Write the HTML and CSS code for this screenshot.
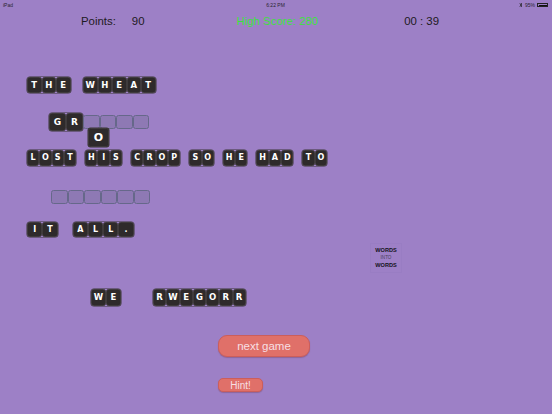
FILE: index.html
```html
<!DOCTYPE html>
<html>
<head>
<meta charset="utf-8">
<link rel="stylesheet" href="styles.css">
</head>
<body>
<div class="status">
  <span class="st-left">iPad</span>
  <span class="st-mid">6:22 PM</span>
  <span class="st-right">
    <svg class="bt" width="4" height="6" viewBox="0 0 4 6"><path d="M0.5 1.5 L3 4 L2 5 L2 1 L3 2 L0.5 4.5" fill="none" stroke="#222" stroke-width="0.6"/></svg>
    <span>95%</span>
    <span class="battery"><span class="battery-fill"></span></span>
  </span>
</div>

<div class="header">
  <span class="points-label">Points:</span>
  <span class="points-val">90</span>
  <span class="high">High Score: 280</span>
  <span class="timer">00 : 39</span>
</div>

<div class="row row1">
  <div class="word"><span class="tile">T</span><span class="tile">H</span><span class="tile">E</span></div>
  <div class="word"><span class="tile">W</span><span class="tile">H</span><span class="tile">E</span><span class="tile">A</span><span class="tile">T</span></div>
</div>

<div class="row row2">
  <div class="word"><span class="tile">G</span><span class="tile">R</span></div>
  <div class="slots"><span class="slot"></span><span class="slot"></span><span class="slot"></span><span class="slot"></span></div>
  <span class="tile tile-o">O</span>
</div>

<div class="row row3">
  <div class="word"><span class="tile">L</span><span class="tile">O</span><span class="tile">S</span><span class="tile">T</span></div>
  <div class="word"><span class="tile">H</span><span class="tile">I</span><span class="tile">S</span></div>
  <div class="word"><span class="tile">C</span><span class="tile">R</span><span class="tile">O</span><span class="tile">P</span></div>
  <div class="word"><span class="tile">S</span><span class="tile">O</span></div>
  <div class="word"><span class="tile">H</span><span class="tile">E</span></div>
  <div class="word"><span class="tile">H</span><span class="tile">A</span><span class="tile">D</span></div>
  <div class="word"><span class="tile">T</span><span class="tile">O</span></div>
</div>

<div class="row row4">
  <div class="slots"><span class="slot"></span><span class="slot"></span><span class="slot"></span><span class="slot"></span><span class="slot"></span><span class="slot"></span></div>
</div>

<div class="row row5">
  <div class="word"><span class="tile">I</span><span class="tile">T</span></div>
  <div class="word"><span class="tile">A</span><span class="tile">L</span><span class="tile">L</span><span class="tile">.</span></div>
</div>

<div class="row row-logo">
  <div class="logo">
    <span class="logo-w">WORDS</span>
    <span class="logo-i">INTO</span>
    <span class="logo-w">WORDS</span>
  </div>
</div>

<div class="row row6">
  <div class="word word-we"><span class="tile">W</span><span class="tile">E</span></div>
  <div class="word word-scr"><span class="tile">R</span><span class="tile">W</span><span class="tile">E</span><span class="tile">G</span><span class="tile">O</span><span class="tile">R</span><span class="tile">R</span></div>
</div>

<div class="row row-btn">
  <button class="btn btn-next">next game</button>
</div>
<div class="row row-hint">
  <button class="btn btn-hint">Hint!</button>
</div>
</body>
</html>
```

FILE: styles.css
```css
* { box-sizing: border-box; }
html, body {
  margin: 0;
  padding: 0;
}
body {
  width: 552px;
  height: 414px;
  overflow: hidden;
  background: #9d80c6;
  font-family: "Liberation Sans", Arial, sans-serif;
  color: #1e1a22;
}

/* status bar */
.status {
  height: 10px;
  display: grid;
  grid-template-columns: 1fr auto 1fr;
  align-items: center;
  font-size: 5px;
  color: #2a2530;
  padding: 0 4px 0 3px;
}
.st-mid { text-align: center; }
.st-right {
  display: flex;
  justify-content: flex-end;
  align-items: center;
  gap: 2px;
}
.battery {
  width: 11px;
  height: 4px;
  border: 0.6px solid #222;
  padding: 0.5px;
  display: flex;
}
.battery-fill { flex: 1; background: #111; }

/* header */
.header {
  height: 21px;
  display: flex;
  align-items: center;
  font-size: 11.4px;
  padding-left: 81px;
  white-space: nowrap;
}
.points-val { margin-left: 16px; }
.high { margin-left: 92px; color: #3ee23e; }
.timer { margin-left: 86px; }

/* board rows */
.row {
  display: flex;
  align-items: center;
}
.word {
  display: flex;
  border-radius: 3px;
  box-shadow: 0 0 0 0.5px #3a3536;
}
.tile {
  display: flex;
  align-items: center;
  justify-content: center;
  background: #2e2a2b;
  border: 1px solid #3f3b3c;
  border-radius: 2.5px;
  color: #ffffff;
  font-family: "DejaVu Sans", Verdana, sans-serif;
  font-weight: bold;
  font-size: 8px;
  line-height: 1;
}

.row1 { margin-top: 46px; height: 16px; padding-left: 27px; gap: 12.5px; }
.row1 .tile { width: 14.5px; height: 16px; font-size: 8.5px; }

.row2 { margin-top: 20px; height: 18px; padding-left: 49px; position: relative; }
.row2 .word .tile { width: 17px; height: 18.5px; font-size: 9px; }
.tile-o {
  position: absolute;
  left: 88px;
  top: 15px;
  width: 21px;
  height: 18.5px;
  font-size: 11px;
  box-shadow: 0 0 0 0.5px #3a3536;
}

.slots { display: flex; }
.slot {
  width: 16.5px;
  height: 14px;
  background: #8e79b4;
  border: 1px solid #66688a;
  border-radius: 2.5px;
}

.row3 { margin-top: 19px; height: 16px; padding-left: 27px; gap: 9px; }
.row3 .tile { width: 12.3px; height: 16px; font-size: 8px; }

.row4 { margin-top: 24px; height: 14px; padding-left: 51px; }

.row5 { margin-top: 18px; height: 15px; padding-left: 27px; gap: 15px; }
.row5 .tile { width: 15.3px; height: 15px; font-size: 8px; }

.row-logo { margin-top: 6px; height: 30px; padding-left: 370px; }
.logo {
  width: 32px;
  height: 30px;
  border: 1px solid #997dc3;
  display: flex;
  flex-direction: column;
  align-items: center;
  justify-content: center;
  gap: 2.5px;
  font-family: "Liberation Sans", Arial, sans-serif;
  line-height: 1;
}
.logo-w { font-size: 5.6px; font-weight: bold; color: #15131a; }
.logo-i { font-size: 4.6px; color: #4a3f5a; }

.row6 { margin-top: 16px; height: 17px; padding-left: 91px; gap: 32px; }
.word-we .tile { width: 15px; height: 17px; font-size: 8.5px; }
.word-scr .tile { width: 13.25px; height: 17px; font-size: 8.5px; }

/* buttons */
.btn {
  font-family: "Liberation Sans", Arial, sans-serif;
  color: #f7dfe3;
  background: #e07069;
  border: 1px solid #cb5e5c;
  box-shadow: 0 1px 1px rgba(120, 50, 70, 0.35);
  padding: 0;
  margin: 0;
  display: flex;
  align-items: center;
  justify-content: center;
}
.row-btn { margin-top: 29px; padding-left: 218px; }
.btn-next {
  width: 92px;
  height: 22px;
  border-radius: 9px;
  font-size: 11.5px;
}
.row-hint { margin-top: 21px; padding-left: 218px; }
.btn-hint {
  width: 45px;
  height: 14px;
  border-radius: 5px;
  font-size: 10px;
}
```
